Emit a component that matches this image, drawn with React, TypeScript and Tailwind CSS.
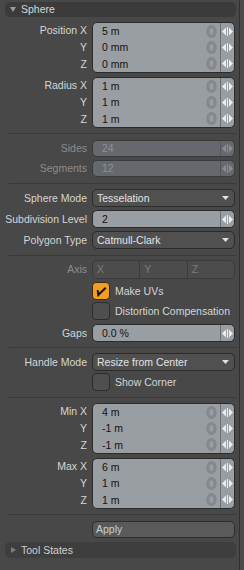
import React from "react";

const FONT = "font-['Liberation_Sans',Arial,sans-serif]";

function Arrows({ dim = false }: { dim?: boolean }) {
  const c = dim ? "#8a8e92" : "#eceef0";
  return (
    <svg width="11" height="9" viewBox="0 0 11 9">
      <polygon points="0,4.5 4,0.5 4,8.5" fill={c} />
      <rect x="5" y="0" width="1" height="9" fill={c} />
      <polygon points="7,0.5 11,4.5 7,8.5" fill={c} />
    </svg>
  );
}

function Ring() {
  return (
    <svg width="11" height="13" viewBox="0 0 11 13">
      <ellipse cx="5.5" cy="6.5" rx="3.6" ry="4.9" fill="none" stroke="#85888c" strokeWidth="3.2" />
    </svg>
  );
}

function Label({ children, dim = false }: { children?: React.ReactNode; dim?: boolean }) {
  return (
    <div className={`w-[87px] shrink-0 text-right whitespace-nowrap ${dim ? "text-[#8c8c8c]" : "text-[#d6d6d6]"}`}>
      {children}
    </div>
  );
}

function Row({ label, dim, h, mt, children }: { label?: string; dim?: boolean; h: string; mt: string; children: React.ReactNode }) {
  return (
    <div className={`flex items-center gap-[5px] ${h} ${mt}`}>
      <Label dim={dim}>{label}</Label>
      <div className="w-[143px] h-full">{children}</div>
    </div>
  );
}

function Group({ labels, values, mt }: { labels: string[]; values: string[]; mt: string }) {
  return (
    <div className={`flex gap-[5px] h-[51px] ${mt}`}>
      <div className="w-[87px] shrink-0 flex flex-col">
        {labels.map((l, i) => (
          <div key={i} className="flex-1 flex items-center justify-end text-[#d6d6d6]">{l}</div>
        ))}
      </div>
      <div className="w-[143px] h-full rounded-[5px] border border-[#2a2b2c] bg-[#999ea3] flex flex-col overflow-hidden">
        {values.map((v, i) => (
          <div key={i} className="flex-1 flex items-center">
            <div className="flex-1 pl-[9px] text-[#121212]">{v}</div>
            <div className="mr-[3px] flex items-center"><Ring /></div>
            <div className="w-[14px] h-full border-l border-[#6a6f74] flex items-center justify-center">
              <Arrows />
            </div>
          </div>
        ))}
      </div>
    </div>
  );
}

function NumField({ value, dim = false }: { value: string; dim?: boolean }) {
  return (
    <div className={`h-full rounded-[5px] border flex items-center overflow-hidden ${dim ? "border-[#3a3b3c] bg-[#65696d]" : "border-[#2a2b2c] bg-[#999ea3]"}`}>
      <div className={`flex-1 pl-[9px] ${dim ? "text-[#8d9195]" : "text-[#121212]"}`}>{value}</div>
      <div className={`w-[14px] h-full border-l flex items-center justify-center ${dim ? "border-[#55595d]" : "border-[#6a6f74]"}`}>
        <Arrows dim={dim} />
      </div>
    </div>
  );
}

function Dropdown({ value }: { value: string }) {
  return (
    <div className="h-full rounded-[5px] border border-[#2b2b2b] bg-[#505050] flex items-center pl-[4px] pr-[5px]">
      <div className="flex-1 text-[#e4e4e4] whitespace-nowrap">{value}</div>
      <svg width="7" height="4" viewBox="0 0 7 4">
        <polygon points="0,0 7,0 3.5,4" fill="#e0e0e0" />
      </svg>
    </div>
  );
}

function Check({ label, checked, mt }: { label: string; checked?: boolean; mt: string }) {
  return (
    <div className={`flex items-center gap-[5px] h-[18px] ${mt}`}>
      <div className="w-[87px] shrink-0" />
      <div className="flex items-center gap-[5px] h-full">
        <div className={`w-[18px] h-[18px] rounded-[4px] border flex items-center justify-center ${checked ? "bg-[#f29e25] border-[#3b2a12]" : "bg-[#4f4f4f] border-[#2c2c2c]"}`}>
          {checked && (
            <svg width="12" height="12" viewBox="0 0 12 12">
              <path d="M2.8 6 L3.3 10 L10 3.5" fill="none" stroke="#111" strokeWidth="2" strokeLinecap="square" />
            </svg>
          )}
        </div>
        <div className="text-[#d6d6d6] whitespace-nowrap">{label}</div>
      </div>
    </div>
  );
}

function Sep({ mt }: { mt: string }) {
  return <div className={`ml-[9px] w-[227px] h-px bg-[#393939] ${mt}`} />;
}

export default function App() {
  return (
    <div className={`w-[244px] h-[570px] bg-[#484848] flex text-[10.5px] leading-none ${FONT}`}>
      <div className="w-[239px] flex flex-col">
        <div className="mt-[2px] ml-[5px] w-[231px] h-[15px] rounded-[5px] bg-[#3b3b3b] flex items-center">
          <svg className="ml-[5px]" width="6" height="5" viewBox="0 0 6 5">
            <polygon points="0,0 6,0 3,5" fill="#9c9c9c" />
          </svg>
          <span className="ml-[5px] text-[#d8d8d8]">Sphere</span>
        </div>

        <Group mt="mt-[5px]" labels={["Position X", "Y", "Z"]} values={["5 m", "0 mm", "0 mm"]} />
        <Group mt="mt-[4px]" labels={["Radius X", "Y", "Z"]} values={["1 m", "1 m", "1 m"]} />

        <Sep mt="mt-[5px]" />

        <Row label="Sides" dim h="h-[17px]" mt="mt-[6px]"><NumField value="24" dim /></Row>
        <Row label="Segments" dim h="h-[17px]" mt="mt-[3px]"><NumField value="12" dim /></Row>

        <Sep mt="mt-[6px]" />

        <Row label="Sphere Mode" h="h-[18px]" mt="mt-[5px]"><Dropdown value="Tesselation" /></Row>
        <Row label="Subdivision Level" h="h-[18px]" mt="mt-[3px]"><NumField value="2" /></Row>
        <Row label="Polygon Type" h="h-[18px]" mt="mt-[3px]"><Dropdown value="Catmull-Clark" /></Row>

        <Sep mt="mt-[6px]" />

        <Row label="Axis" dim h="h-[19px]" mt="mt-[4px]">
          <div className="h-full rounded-[5px] border border-[#3a3a3a] bg-[#4c4c4c] flex text-[#7c7c7c]">
            <div className="flex-1 pl-[4px] flex items-center border-r border-[#3a3a3a]">X</div>
            <div className="flex-1 pl-[4px] flex items-center border-r border-[#3a3a3a]">Y</div>
            <div className="flex-1 pl-[4px] flex items-center">Z</div>
          </div>
        </Row>

        <Check label="Make UVs" checked mt="mt-[3px]" />
        <Check label="Distortion Compensation" mt="mt-[2px]" />

        <Row label="Gaps" h="h-[18px]" mt="mt-[4px]"><NumField value="0.0 %" /></Row>

        <Sep mt="mt-[5px]" />

        <Row label="Handle Mode" h="h-[18px]" mt="mt-[5px]"><Dropdown value="Resize from Center" /></Row>
        <Check label="Show Corner" mt="mt-[2px]" />

        <Sep mt="mt-[6px]" />

        <Group mt="mt-[5px]" labels={["Min X", "Y", "Z"]} values={["4 m", "-1 m", "-1 m"]} />
        <Group mt="mt-[4px]" labels={["Max X", "Y", "Z"]} values={["6 m", "1 m", "1 m"]} />

        <Sep mt="mt-[5px]" />

        <Row h="h-[17px]" mt="mt-[6px]">
          <div className="h-full rounded-[5px] border border-[#2e2e2e] bg-[#5a5a5a] flex items-center pl-[3px] text-[#c6cfd9]">Apply</div>
        </Row>

        <div className="mt-[4px] ml-[5px] w-[231px] h-[16px] rounded-[5px] bg-[#3e3e3e] flex items-center">
          <svg className="ml-[6px]" width="5" height="6" viewBox="0 0 5 6">
            <polygon points="0,0 5,3 0,6" fill="#7c7c7c" />
          </svg>
          <span className="ml-[5px] text-[#d0d0d0]">Tool States</span>
        </div>
      </div>
      <div className="w-px bg-[#303030]" />
      <div className="flex-1 bg-[#4a4a4a]" />
    </div>
  );
}
